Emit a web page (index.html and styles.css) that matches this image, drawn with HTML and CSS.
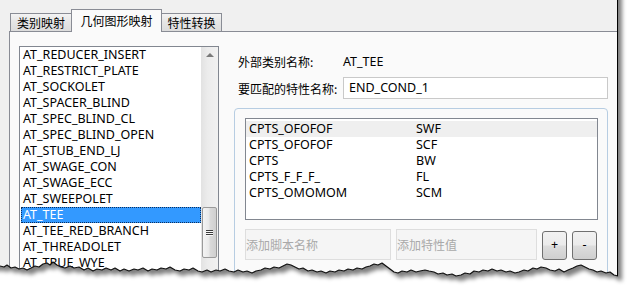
FILE: index.html
```html
<!DOCTYPE html>
<html lang="zh-CN">
<head>
<meta charset="utf-8">
<title>几何图形映射</title>
<link rel="stylesheet" href="styles.css">
</head>
<body>
<div class="stage">
  <div class="dialog">
    <div class="tabs">
      <div class="tab t1">类别映射</div>
      <div class="tab t2 active">几何图形映射</div>
      <div class="tab t3">特性转换</div>
    </div>
    <div class="panel">
      <div class="listbox">
        <ul class="items">
          <li>AT_REDUCER_INSERT</li>
          <li>AT_RESTRICT_PLATE</li>
          <li>AT_SOCKOLET</li>
          <li>AT_SPACER_BLIND</li>
          <li>AT_SPEC_BLIND_CL</li>
          <li>AT_SPEC_BLIND_OPEN</li>
          <li>AT_STUB_END_LJ</li>
          <li>AT_SWAGE_CON</li>
          <li>AT_SWAGE_ECC</li>
          <li>AT_SWEEPOLET</li>
          <li class="sel">AT_TEE</li>
          <li>AT_TEE_RED_BRANCH</li>
          <li>AT_THREADOLET</li>
          <li>AT_TRUE_WYE</li>
          <li>AT_UNION</li>
        </ul>
        <div class="vscroll">
          <div class="arrow-up"><span class="tri"></span></div>
          <div class="track">
            <div class="thumb"><span class="grip"></span><span class="grip"></span><span class="grip"></span></div>
          </div>
        </div>
      </div>
      <div class="right">
        <div class="field">
          <span class="lbl">外部类别名称:</span>
          <span class="val">AT_TEE</span>
        </div>
        <div class="field">
          <span class="lbl">要匹配的特性名称:</span>
          <div class="input">END_COND_1</div>
        </div>
        <div class="group">
          <div class="table">
            <div class="row hot"><span class="c1">CPTS_OFOFOF</span><span class="c2">SWF</span></div>
            <div class="row"><span class="c1">CPTS_OFOFOF</span><span class="c2">SCF</span></div>
            <div class="row"><span class="c1">CPTS</span><span class="c2">BW</span></div>
            <div class="row"><span class="c1">CPTS_F_F_F_</span><span class="c2">FL</span></div>
            <div class="row"><span class="c1">CPTS_OMOMOM</span><span class="c2">SCM</span></div>
          </div>
          <div class="addrow">
            <div class="ph w1">添加脚本名称</div>
            <div class="ph w2">添加特性值</div>
            <div class="btn">+</div>
            <div class="btn">-</div>
          </div>
        </div>
      </div>
    </div>
  </div>
  <svg class="tear" width="634" height="296" viewBox="0 0 634 296">
    <defs>
      <path id="edge" d="M0,266 L4,267 L7,265 L11,268 L15,267 L19,269 L23,268 L27,270 L31,268 L35,266 L39,267 L43,264 L47,263 L50,265 L53,262 L57,265 L61,267 L65,268 L70,266 L74,268 L79,267 L84,270 L88,268 L93,271 L97,269 L102,270 L106,268 L111,270 L115,268 L120,271 L124,269 L129,271 L134,269 L138,270 L143,268 L148,271 L152,269 L157,270 L161,268 L166,269 L170,267 L175,270 L180,271 L184,269 L189,270 L193,268 L198,271 L202,272 L207,270 L211,272 L216,270 L220,271 L225,269 L229,271 L234,272 L238,270 L243,272 L247,271 L252,273 L256,271 L261,270 L265,268 L270,269 L274,267 L279,268 L283,266 L287,264 L291,265 L295,267 L299,269 L303,268 L308,271 L312,270 L317,272 L321,271 L326,273 L330,271 L335,272 L339,270 L344,271 L348,269 L353,270 L357,268 L362,269 L366,267 L370,266 L374,264 L378,265 L382,263 L386,266 L390,269 L394,272 L398,273 L402,271 L407,272 L411,270 L416,272 L420,271 L425,270 L429,271 L434,272 L438,274 L443,273 L447,275 L452,274 L456,276 L461,275 L465,273 L470,274 L474,271 L479,272 L483,270 L488,271 L492,269 L497,271 L501,270 L506,272 L510,271 L515,273 L519,272 L524,270 L528,271 L533,268 L537,269 L541,267 L546,268 L550,270 L555,271 L559,269 L564,272 L568,270 L573,268 L577,266 L581,265 L585,267 L589,269 L593,270 L597,272 L601,271 L606,273 L610,272 L614,275 L618,276"/>
      <clipPath id="outside">
        <path d="M0,266 L4,267 L7,265 L11,268 L15,267 L19,269 L23,268 L27,270 L31,268 L35,266 L39,267 L43,264 L47,263 L50,265 L53,262 L57,265 L61,267 L65,268 L70,266 L74,268 L79,267 L84,270 L88,268 L93,271 L97,269 L102,270 L106,268 L111,270 L115,268 L120,271 L124,269 L129,271 L134,269 L138,270 L143,268 L148,271 L152,269 L157,270 L161,268 L166,269 L170,267 L175,270 L180,271 L184,269 L189,270 L193,268 L198,271 L202,272 L207,270 L211,272 L216,270 L220,271 L225,269 L229,271 L234,272 L238,270 L243,272 L247,271 L252,273 L256,271 L261,270 L265,268 L270,269 L274,267 L279,268 L283,266 L287,264 L291,265 L295,267 L299,269 L303,268 L308,271 L312,270 L317,272 L321,271 L326,273 L330,271 L335,272 L339,270 L344,271 L348,269 L353,270 L357,268 L362,269 L366,267 L370,266 L374,264 L378,265 L382,263 L386,266 L390,269 L394,272 L398,273 L402,271 L407,272 L411,270 L416,272 L420,271 L425,270 L429,271 L434,272 L438,274 L443,273 L447,275 L452,274 L456,276 L461,275 L465,273 L470,274 L474,271 L479,272 L483,270 L488,271 L492,269 L497,271 L501,270 L506,272 L510,271 L515,273 L519,272 L524,270 L528,271 L533,268 L537,269 L541,267 L546,268 L550,270 L555,271 L559,269 L564,272 L568,270 L573,268 L577,266 L581,265 L585,267 L589,269 L593,270 L597,272 L601,271 L606,273 L610,272 L614,275 L618,276 L618,0 L634,0 L634,296 L0,296 Z"/>
      </clipPath>
      <filter id="blur" x="-5%" y="-5%" width="115%" height="120%">
        <feGaussianBlur stdDeviation="2.2"/>
      </filter>
    </defs>
    <g clip-path="url(#outside)">
      <rect x="0" y="0" width="634" height="296" fill="#fff"/>
      <path filter="url(#blur)" fill="rgba(0,0,0,0.5)" transform="translate(4,5)" d="M0,266 L4,267 L7,265 L11,268 L15,267 L19,269 L23,268 L27,270 L31,268 L35,266 L39,267 L43,264 L47,263 L50,265 L53,262 L57,265 L61,267 L65,268 L70,266 L74,268 L79,267 L84,270 L88,268 L93,271 L97,269 L102,270 L106,268 L111,270 L115,268 L120,271 L124,269 L129,271 L134,269 L138,270 L143,268 L148,271 L152,269 L157,270 L161,268 L166,269 L170,267 L175,270 L180,271 L184,269 L189,270 L193,268 L198,271 L202,272 L207,270 L211,272 L216,270 L220,271 L225,269 L229,271 L234,272 L238,270 L243,272 L247,271 L252,273 L256,271 L261,270 L265,268 L270,269 L274,267 L279,268 L283,266 L287,264 L291,265 L295,267 L299,269 L303,268 L308,271 L312,270 L317,272 L321,271 L326,273 L330,271 L335,272 L339,270 L344,271 L348,269 L353,270 L357,268 L362,269 L366,267 L370,266 L374,264 L378,265 L382,263 L386,266 L390,269 L394,272 L398,273 L402,271 L407,272 L411,270 L416,272 L420,271 L425,270 L429,271 L434,272 L438,274 L443,273 L447,275 L452,274 L456,276 L461,275 L465,273 L470,274 L474,271 L479,272 L483,270 L488,271 L492,269 L497,271 L501,270 L506,272 L510,271 L515,273 L519,272 L524,270 L528,271 L533,268 L537,269 L541,267 L546,268 L550,270 L555,271 L559,269 L564,272 L568,270 L573,268 L577,266 L581,265 L585,267 L589,269 L593,270 L597,272 L601,271 L606,273 L610,272 L614,275 L618,276 L618,-10 L-10,-10 L-10,266 Z"/>
    </g>
    <use href="#edge" fill="none" stroke="#111" stroke-width="1.2" stroke-linejoin="round"/>
    <line x1="617.5" y1="0" x2="617.5" y2="276" stroke="#000" stroke-width="1"/>
  </svg>
</div>
</body>
</html>
```

FILE: styles.css
```css
html, body {
  margin: 0;
  background: #ffffff;
}

.stage {
  position: relative;
  width: 634px;
  height: 296px;
  overflow: hidden;
  font-family: "Noto Sans", "Noto Sans CJK SC", sans-serif;
  font-size: 12.5px;
  color: #000;
}

.dialog {
  width: 617px;
  height: 296px;
  background: #f0f0f0;
  border-right: 1px solid #000;
  display: flex;
  flex-direction: column;
  overflow: hidden;
}

/* tab strip */
.tabs {
  flex: none;
  height: 31px;
  display: flex;
  align-items: flex-end;
  padding-left: 10px;
}

.tab {
  box-sizing: border-box;
  height: 18px;
  border: 1px solid #898c95;
  border-bottom: none;
  background: linear-gradient(#f3f3f3, #e6e6e6 45%, #dcdcdc);
  line-height: 17px;
  text-align: center;
  font-family: "Noto Sans CJK SC", sans-serif;
  font-size: 12px;
  white-space: nowrap;
}

.t1 { width: 62px; }
.t2 { width: 91px; margin-left: -1px; }
.t3 { width: 61px; margin-left: -1px; }

.tab.active {
  position: relative;
  z-index: 1;
  height: 23px;
  margin-bottom: -1px;
  background: #fafafa;
  line-height: 21px;
}

/* tab panel */
.panel {
  flex: 1;
  margin-left: 9px;
  border: 1px solid #898c95;
  border-right: none;
  background: #fafafa;
  display: flex;
  align-items: flex-start;
  padding: 14px 0 0 9px;
}

/* left list */
.listbox {
  flex: none;
  box-sizing: border-box;
  width: 200px;
  height: 240px;
  border: 1px solid #828790;
  background: #fff;
  display: flex;
}

.items {
  flex: 1;
  list-style: none;
  margin: 0;
  padding: 0;
  min-width: 0;
}

.items li {
  box-sizing: border-box;
  height: 16px;
  line-height: 16px;
  margin-left: 1px;
  padding-left: 2px;
  white-space: nowrap;
}

.items li.sel {
  background: #3399ff;
  color: #fff;
  outline: 1px dotted #0b2f5e;
  outline-offset: -1px;
}

.vscroll {
  flex: none;
  width: 17px;
  display: flex;
  flex-direction: column;
  background: linear-gradient(to right, #e2e2e2, #ececec 40%, #f1f1f1);
}

.arrow-up {
  height: 17px;
  display: flex;
  align-items: center;
  justify-content: center;
}

.tri {
  width: 0;
  height: 0;
  border-left: 4px solid transparent;
  border-right: 4px solid transparent;
  border-bottom: 4px solid #7a7a7a;
  margin-top: -2px;
}

.track {
  flex: 1;
}

.thumb {
  box-sizing: border-box;
  width: 15px;
  height: 51px;
  margin: 143px 0 0 1px;
  border: 1px solid #9a9a9a;
  border-radius: 2px;
  background: linear-gradient(to right, #f4f4f4, #e9e9e9 45%, #d9d9d9 55%, #cfcfcf);
  display: flex;
  flex-direction: column;
  align-items: center;
  justify-content: center;
  gap: 1px;
}

.grip {
  width: 7px;
  height: 1px;
  background: #3c3c3c;
  box-shadow: 0 1px 0 #f8f8f8;
}

/* right side */
.right {
  flex: none;
  width: 374px;
  margin-left: 15px;
  padding-top: 4px;
  display: flex;
  flex-direction: column;
}

.field {
  display: flex;
  align-items: center;
  height: 22px;
}

.field + .field {
  margin-top: 5px;
}

.lbl {
  box-sizing: border-box;
  width: 109px;
  padding-left: 4px;
  font-family: "Noto Sans CJK SC", sans-serif;
  font-size: 12px;
  white-space: nowrap;
}

.input {
  box-sizing: border-box;
  width: 265px;
  height: 22px;
  border: 1px solid #c9c9c9;
  background: #fff;
  padding-left: 5px;
  line-height: 20px;
}

.group {
  margin-top: 9px;
  border: 1px solid #b7cde2;
  border-radius: 4px;
  padding: 9px 9px 20px 10px;
}

.table {
  box-sizing: border-box;
  width: 353px;
  height: 102px;
  border: 1px solid #828790;
  background: #fff;
  padding-top: 2px;
}

.row {
  display: flex;
  height: 16px;
  line-height: 16px;
  white-space: nowrap;
}

.row.hot {
  background: #efefef;
}

.c1 {
  box-sizing: border-box;
  width: 170px;
  padding-left: 3px;
}

.addrow {
  display: flex;
  align-items: flex-end;
  gap: 5px;
  margin-top: 9px;
}

.ph {
  box-sizing: border-box;
  height: 31px;
  border: 1px solid #dedede;
  background: #f5f5f5;
  color: #a9a9a9;
  line-height: 29px;
  font-family: "Noto Sans CJK SC", sans-serif;
  font-size: 12px;
  white-space: nowrap;
}

.w1 { width: 146px; }
.w2 { width: 141px; }

.btn {
  box-sizing: border-box;
  width: 25px;
  height: 29px;
  border: 1px solid #707070;
  border-radius: 3px;
  background: linear-gradient(#f2f2f2, #ebebeb 48%, #dddddd 52%, #cfcfcf);
  display: flex;
  align-items: center;
  justify-content: center;
  line-height: 1;
}

/* torn-edge overlay */
.tear {
  position: absolute;
  left: 0;
  top: 0;
  pointer-events: none;
}
```
